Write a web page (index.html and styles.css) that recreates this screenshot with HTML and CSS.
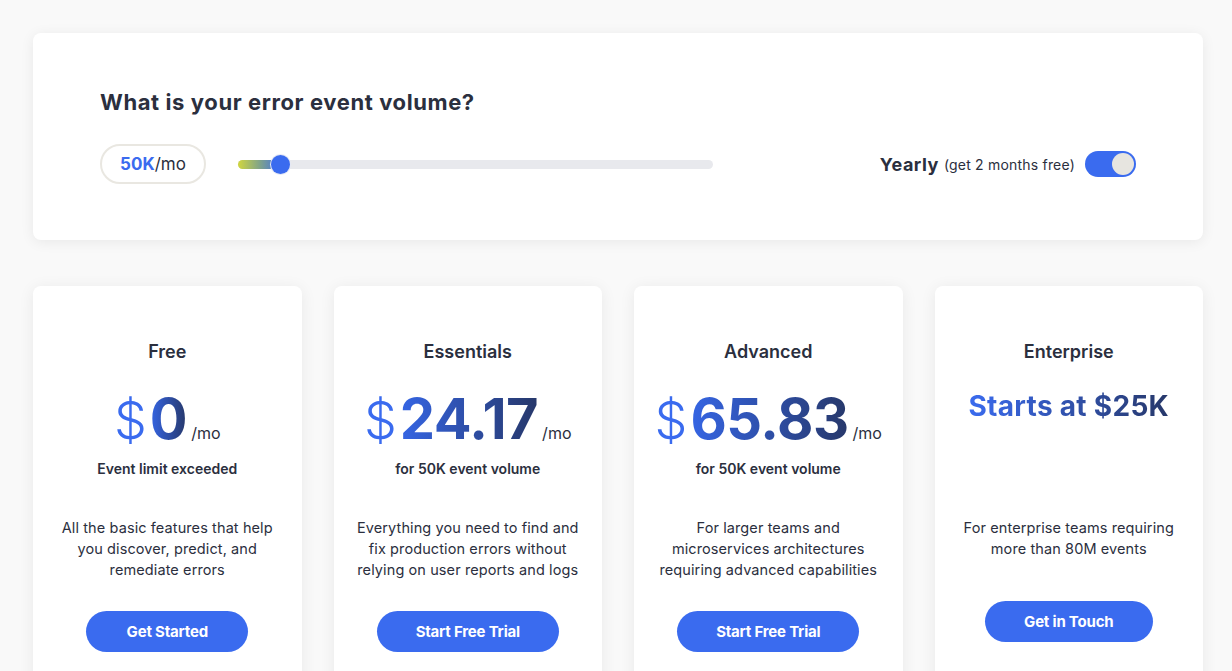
FILE: index.html
```html
<!DOCTYPE html>
<html>
<head>
<meta charset="utf-8">
<link rel="stylesheet" href="styles.css">
</head>
<body>
<div class="page">
  <section class="volume">
    <h2 class="volume-title">What is your error event volume?</h2>
    <div class="volume-row">
      <div class="pill"><span class="pill-num">50K</span>/mo</div>
      <div class="slider">
        <div class="slider-fill"></div>
        <div class="slider-thumb"></div>
      </div>
      <div class="billing">
        <span class="billing-main">Yearly</span>
        <span class="billing-note">(get 2 months free)</span>
        <span class="toggle"><span class="toggle-knob"></span></span>
      </div>
    </div>
  </section>

  <div class="plans">
    <div class="plan">
      <h3 class="plan-name">Free</h3>
      <div class="price"><span class="price-cur">$</span><span class="price-num">0</span><span class="price-per">/mo</span></div>
      <div class="plan-sub">Event limit exceeded</div>
      <p class="plan-desc">All the basic features that help you discover, predict, and remediate errors</p>
      <a class="btn">Get Started</a>
    </div>
    <div class="plan">
      <h3 class="plan-name">Essentials</h3>
      <div class="price"><span class="price-cur">$</span><span class="price-num">24.17</span><span class="price-per">/mo</span></div>
      <div class="plan-sub">for 50K event volume</div>
      <p class="plan-desc">Everything you need to find and fix production errors without relying on user reports and logs</p>
      <a class="btn btn-wide">Start Free Trial</a>
    </div>
    <div class="plan">
      <h3 class="plan-name">Advanced</h3>
      <div class="price"><span class="price-cur">$</span><span class="price-num">65.83</span><span class="price-per">/mo</span></div>
      <div class="plan-sub">for 50K event volume</div>
      <p class="plan-desc">For larger teams and microservices architectures requiring advanced capabilities</p>
      <a class="btn btn-wide">Start Free Trial</a>
    </div>
    <div class="plan plan-ent">
      <h3 class="plan-name">Enterprise</h3>
      <div class="price-ent"><span class="ent-text">Starts at $25K</span></div>
      <p class="plan-desc desc-ent">For enterprise teams requiring more than 80M events</p>
      <a class="btn btn-ent">Get in Touch</a>
    </div>
  </div>
</div>
</body>
</html>
```

FILE: styles.css
```css
* { box-sizing: border-box; }
html, body { margin: 0; padding: 0; }
body {
  background: #f9f9f9;
  font-family: "Inter", "Noto Sans", sans-serif;
  color: #2b2f3e;
  overflow: hidden;
}
.page {
  padding: 33px 29px 0 33px;
  width: 1232px;
}
.volume {
  background: #fff;
  border-radius: 8px;
  box-shadow: 0 2px 14px rgba(0,0,0,0.07);
  height: 207px;
  padding: 56px 67px 0 67px;
}
.volume-title {
  margin: 0;
  font-size: 22px;
  line-height: 26px;
  font-weight: 700;
  color: #2b2f3e;
  letter-spacing: 0.6px;
}
.volume-row {
  display: flex;
  align-items: center;
  margin-top: 29px;
  height: 40px;
}
.pill {
  width: 106px;
  height: 40px;
  border: 2px solid #e9e7e1;
  border-radius: 20px;
  display: flex;
  align-items: center;
  justify-content: center;
  font-size: 17px;
  color: #2b2f3e;
}
.pill-num { color: #3a6bef; font-weight: 700; }
.slider {
  position: relative;
  margin-left: 32px;
  width: 475px;
  height: 9px;
  background: #e8e9ed;
  border-radius: 5px;
}
.slider-fill {
  position: absolute;
  left: 0; top: 0;
  width: 44px; height: 9px;
  border-radius: 5px;
  background: linear-gradient(90deg, #d1d63f 0%, #7fa38a 50%, #3a6bef 100%);
}
.slider-thumb {
  position: absolute;
  left: 33px; top: -5px;
  width: 19px; height: 19px;
  border-radius: 50%;
  background: #3a6bef;
  box-shadow: 0 0 0 1px #e4e8f5;
}
.billing {
  margin-left: auto;
  display: flex;
  align-items: center;
  margin-right: 0;
}
.billing-main { font-size: 18px; font-weight: 700; color: #2b2f3e; letter-spacing: 0.5px; }
.billing-note { font-size: 14px; margin-left: 5px; color: #2b2f3e; letter-spacing: 0.2px; }
.toggle {
  margin-left: 10px;
  width: 51px; height: 26px;
  border-radius: 13px;
  background: #3a6bef;
  position: relative;
}
.toggle-knob {
  position: absolute;
  right: 2px; top: 2px;
  width: 22px; height: 22px;
  border-radius: 50%;
  background: #e7e5e0;
}
.plans {
  display: grid;
  grid-template-columns: repeat(4, 1fr);
  gap: 32px;
  margin-top: 46px;
}
.plan {
  background: #fff;
  border-radius: 8px;
  box-shadow: 0 2px 16px rgba(0,0,0,0.07);
  height: 420px;
  padding-top: 54px;
  display: flex;
  flex-direction: column;
  align-items: center;
  text-align: center;
}
.plan-name {
  margin: 0;
  font-size: 18px;
  line-height: 24px;
  font-weight: 600;
  color: #2b2f3e;
}
.price {
  margin-top: 22px;
  height: 66px;
  display: flex;
  align-items: baseline;
  justify-content: center;
  line-height: 66px;
}
.price-cur {
  font-size: 52px;
  font-weight: 300;
  color: #3a6bef;
  margin-right: 3px;
}
.price-num {
  font-size: 56px;
  font-weight: 700;
  letter-spacing: -0.5px;
  background: linear-gradient(90deg, #3565e4 0%, #27386a 100%);
  -webkit-background-clip: text;
  background-clip: text;
  color: transparent;
}
.price-per {
  font-size: 16px;
  margin-left: 4px;
  color: #2b2f3e;
}
.plan-sub {
  margin-top: 7px;
  font-size: 14px;
  line-height: 20px;
  font-weight: 600;
  color: #2b2f3e;
}
.plan-desc {
  margin: 38px 0 0 0;
  width: 232px;
  font-size: 14.5px;
  line-height: 21px;
  color: #2b2f3e;
  letter-spacing: 0.1px;
}
.btn {
  margin-top: 31px;
  width: 162px;
  height: 41px;
  border-radius: 21px;
  background: #3a6bef;
  color: #fff;
  font-size: 15px;
  font-weight: 700;
  display: flex;
  align-items: center;
  justify-content: center;
  letter-spacing: -0.2px;
}
.btn-wide { width: 182px; }
.btn-ent { width: 168px; margin-top: 42px; }
.price-ent {
  margin-top: 25px;
  height: 34px;
  line-height: 34px;
}
.ent-text {
  font-size: 28px;
  font-weight: 700;
  letter-spacing: 0.3px;
  background: linear-gradient(90deg, #3a6bef 0%, #27386a 100%);
  -webkit-background-clip: text;
  background-clip: text;
  color: transparent;
}
.desc-ent { margin-top: 94px; }
```
